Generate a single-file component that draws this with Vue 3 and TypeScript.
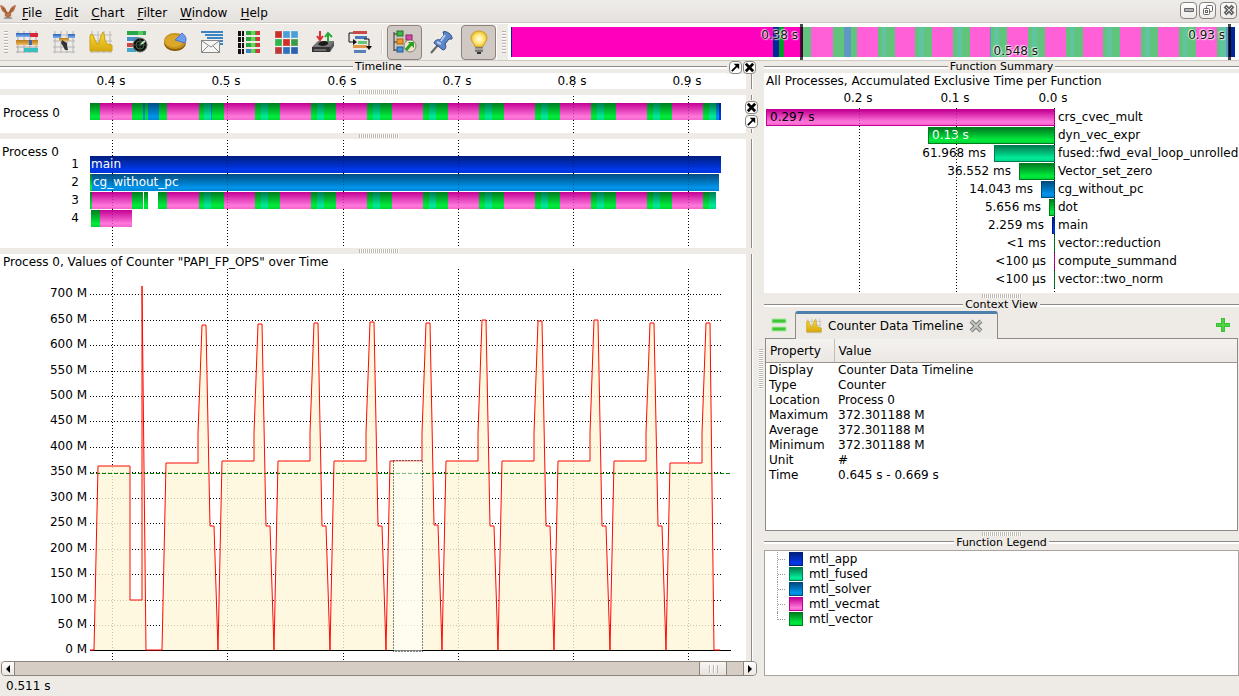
<script setup lang="ts">
type Kind = 'navy' | 'green' | 'pink' | 'blue' | 'teal' | 'gap'
interface Segment { kind: Kind; size: number }

const menus = ['File', 'Edit', 'Chart', 'Filter', 'Window', 'Help']

const START = 90
const SPAN = 631

/* Turns [kind, end] pairs into segments with a length each. */
function segments(from: number, list: [Kind, number][]): Segment[] {
  let at = from
  return list.map(([kind, end]) => {
    const size = end - at
    at = end
    return { kind, size }
  })
}

/* Solver iterations repeat every 56 units. */
const iterations: [Kind, number][] = []
for (let s = 224; s < 672; s += 56) {
  iterations.push(['pink', s + 31], ['green', s + 37], ['teal', s + 44], ['green', s + 56])
}
iterations.push(['pink', 703], ['green', 709], ['teal', 716])

const processLane = segments(START, [
  ['green', 100], ['pink', 132], ['green', 143], ['blue', 145], ['green', 148], ['blue', 159],
  ['green', 167], ['pink', 199], ['green', 204], ['teal', 211], ['blue', 212], ['green', 224],
  ...iterations, ['blue', 719], ['navy', 721],
])

const stackLanes = [
  { level: 1, label: 'main', inset: false, items: segments(START, [['navy', 721]]) },
  { level: 2, label: 'cg_without_pc', inset: true, items: segments(START, [['green', 92], ['blue', 719], ['gap', 721]]) },
  {
    level: 3, label: '', inset: false, items: segments(START, [
      ['green', 92], ['pink', 132], ['green', 143], ['gap', 144], ['green', 148], ['gap', 158], ['green', 167],
      ['pink', 199], ['green', 204], ['teal', 211], ['green', 224], ...iterations, ['gap', 721],
    ]),
  },
  { level: 4, label: '', inset: false, items: segments(START, [['gap', 91], ['green', 100], ['pink', 132], ['gap', 721]]) },
]

const ticks = [112, 227, 343, 458, 573, 688].map((x, i) => ({
  label: `0.${i + 4} s`,
  x: x - START,
  left: `${((x - START) / SPAN) * 100}%`,
}))

/* Overview strip */
const overviewPlain = segments(511, [['navy', 512], ['pink', 773], ['navy', 779], ['green', 784], ['pink', 803]])
const overviewZoomed = segments(803, [
  ['green', 811], ['pink', 833], ['green', 844], ['blue', 851], ['green', 857],
  ['pink', 878], ['green', 882], ['teal', 886], ['green', 895],
  ['pink', 915], ['green', 919], ['teal', 924], ['green', 932],
  ['pink', 953], ['green', 957], ['teal', 962], ['green', 970],
  ['pink', 990], ['blue', 991], ['green', 994], ['teal', 999], ['green', 1007],
  ['pink', 1028], ['green', 1032], ['teal', 1037], ['green', 1045],
  ['pink', 1066], ['green', 1070], ['teal', 1074], ['green', 1083],
  ['pink', 1103], ['green', 1107], ['teal', 1112], ['green', 1120],
  ['pink', 1141], ['green', 1145], ['teal', 1150], ['green', 1158],
  ['pink', 1179], ['green', 1183], ['teal', 1187], ['green', 1196],
  ['pink', 1217], ['green', 1220], ['teal', 1226], ['blue', 1229],
])
const overviewTail = segments(1229, [['navy', 1235]])

/* Counter chart: plot area is 641 x 393 units, zero line at 382. */
const PLOT_H = 393
const gridRows = [26, 52, 77, 103, 128, 153, 179, 204, 230, 255, 281, 306, 332, 357].map((y, i) => ({
  label: `${700 - i * 50} M`, y,
}))
const yLabels = [...gridRows, { label: '0 M', y: 382 }].map(r => ({ ...r, top: `${(r.y / PLOT_H) * 100}%` }))

const points: [number, number][] = [
  [0, 382], [4, 382], [8, 198], [40, 198], [40, 332], [52, 332], [52, 18], [56, 382], [72, 382],
  [76, 195], [108, 195], [108, 165], [112, 57], [116, 57], [120, 258], [124, 258], [128, 382],
]
const peaks = [56, 55, 54, 55, 52, 53, 52, 55, 55]
peaks.forEach((peak, i) => {
  const b = 128 + i * 56
  const last = i === peaks.length - 1
  const flat = last ? 195 : 193
  points.push([b + 4, flat], [b + 36, flat], [b + 36, 165], [b + 40, peak], [b + 44, peak])
  if (last) points.push([b + 48, 382], [b + 54, 382])
  else points.push([b + 48, i === 3 ? 257 : 258], [b + 52, i === 3 ? 257 : 258], [b + 56, 382])
})
const curve = points.map(p => p.join(',')).join(' ')

/* Function summary: bar lengths on an axis 291 units wide. */
const summary: { name: string; time: string; size: number; kind: Kind; inside?: 'dark' | 'light' }[] = [
  { name: 'crs_cvec_mult', time: '0.297 s', size: 289, kind: 'pink', inside: 'dark' },
  { name: 'dyn_vec_expr', time: '0.13 s', size: 127, kind: 'green', inside: 'light' },
  { name: 'fused::fwd_eval_loop_unrolled', time: '61.968 ms', size: 61, kind: 'teal' },
  { name: 'Vector_set_zero', time: '36.552 ms', size: 36, kind: 'green' },
  { name: 'cg_without_pc', time: '14.043 ms', size: 14, kind: 'blue' },
  { name: 'dot', time: '5.656 ms', size: 6, kind: 'green' },
  { name: 'main', time: '2.259 ms', size: 3, kind: 'navy' },
  { name: 'vector::reduction', time: '<1 ms', size: 1, kind: 'green' },
  { name: 'compute_summand', time: '<100 µs', size: 1, kind: 'pink' },
  { name: 'vector::two_norm', time: '<100 µs', size: 1, kind: 'green' },
]
const summaryTicks = [
  { label: '0.2 s', left: `${(95 / 291) * 100}%` },
  { label: '0.1 s', left: `${(192 / 291) * 100}%` },
  { label: '0.0 s', left: `${(290 / 291) * 100}%` },
]

const properties = [
  ['Display', 'Counter Data Timeline'],
  ['Type', 'Counter'],
  ['Location', 'Process 0'],
  ['Maximum', '372.301188 M'],
  ['Average', '372.301188 M'],
  ['Minimum', '372.301188 M'],
  ['Unit', '#'],
  ['Time', '0.645 s - 0.669 s'],
]

const legend: { name: string; kind: Kind }[] = [
  { name: 'mtl_app', kind: 'navy' },
  { name: 'mtl_fused', kind: 'teal' },
  { name: 'mtl_solver', kind: 'blue' },
  { name: 'mtl_vecmat', kind: 'pink' },
  { name: 'mtl_vector', kind: 'green' },
]

const gridPath = 'M1 5H23M1 11H23M1 17H23M1 22H23M3 1V23M9 1V23M15 1V23M21 1V23'
const histogramPath = 'M1 21V6L2 4L4 5L6 10L8 14L10 13L12 6L14 2L15 4L16 10L18 14L23 15V21Z'
const matrix = ['#c9302a', '#4a9fd8', '#4a9fd8', '#2fb34a', '#d03028', '#3a9a48', '#b83a3a', '#2f6fc0', '#2a62b0']
</script>

<template>
  <div class="app">
    <svg class="defs" width="0" height="0" aria-hidden="true">
      <defs>
        <linearGradient id="gold" x1="0" y1="0" x2="0" y2="1"><stop offset="0" stop-color="#f8dc30" /><stop offset="1" stop-color="#d8a810" /></linearGradient>
        <linearGradient id="azure" x1="0" y1="0" x2="0" y2="1"><stop offset="0" stop-color="#2a60b8" /><stop offset="1" stop-color="#7fb4f0" /></linearGradient>
        <linearGradient id="amber" x1="0" y1="0" x2="0" y2="1"><stop offset="0" stop-color="#b87818" /><stop offset="1" stop-color="#f0b860" /></linearGradient>
        <radialGradient id="glow"><stop offset="0" stop-color="#fffde8" /><stop offset="0.6" stop-color="#ffe878" /><stop offset="1" stop-color="#e8b828" /></radialGradient>
      </defs>
    </svg>

    <header class="menubar">
      <svg class="logo" viewBox="0 0 16 16" aria-hidden="true">
        <path d="M0 1C3 1 6 4 7 8H9C10 4 13 1 16 1C15 5 14 8 11 9C12 11 11 13 8 14C5 13 4 11 5 9C2 8 1 5 0 1Z" fill="#b87048" />
        <path d="M3 4L7 9M13 4L9 9" stroke="#8a4a28" fill="none" />
        <path d="M4 14H12" stroke="#666" />
      </svg>
      <nav class="menus">
        <button v-for="m in menus" :key="m" class="menu"><u>{{ m[0] }}</u>{{ m.slice(1) }}</button>
      </nav>
      <div class="window-buttons">
        <button class="win" aria-label="Minimize"><svg viewBox="0 0 12 12"><rect x="1" y="4" width="10" height="4" rx="1" fill="#666" /><path d="M2 6H10" stroke="#fff" /></svg></button>
        <button class="win" aria-label="Restore"><svg viewBox="0 0 12 12" fill="#fff" stroke="#666"><rect x="4.500" y="1.500" width="6" height="6" rx="1" /><rect x="1.500" y="4.500" width="6" height="6" rx="1" /><rect x="3.500" y="6.500" width="2" height="2" /></svg></button>
        <button class="win last" aria-label="Close"><svg viewBox="0 0 12 12"><path d="M2 2L10 10M10 2L2 10" stroke="#666" stroke-width="4" /><path d="M3 3L9 9M9 3L3 9" stroke="#ddd" /></svg></button>
      </div>
    </header>

    <div class="toolbar">
      <span class="grip"></span>
      <div class="tools">
        <button class="tool" aria-label="Master timeline"><svg viewBox="0 0 24 24">
          <path :d="gridPath" stroke="#aaa" /><rect x="1" y="3" width="14" height="4" fill="url(#azure)" /><rect x="15" y="3" width="8" height="4" fill="#d82838" />
          <rect x="1" y="10" width="22" height="5" fill="url(#amber)" /><rect x="14" y="10" width="3" height="5" fill="#3a68b0" /><rect x="9" y="18" width="14" height="4" fill="#38c0c0" /></svg></button>
        <button class="tool" aria-label="Process timeline"><svg viewBox="0 0 24 24">
          <path :d="gridPath" stroke="#b4b4b4" /><rect x="1" y="4" width="8" height="4" fill="url(#azure)" /><rect x="16" y="4" width="7" height="4" fill="url(#azure)" /><rect x="7" y="8" width="10" height="3" fill="url(#amber)" />
          <path d="M10 10L15 13V16L16 20H13L11 16L9 13Z" fill="#333" /></svg></button>
        <button class="tool" aria-label="Counter data timeline"><svg viewBox="0 0 24 24">
          <path :d="gridPath" stroke="#bbb" /><path :d="histogramPath" fill="url(#gold)" stroke="#c8a018" /></svg></button>
        <button class="tool" aria-label="Performance radar"><svg viewBox="0 0 24 24">
          <rect x="1" y="1" width="19" height="4" fill="#28a848" /><rect x="12" y="1" width="5" height="4" fill="#58c860" /><rect x="1" y="7" width="12" height="4" fill="#4890c8" /><rect x="1" y="13" width="8" height="4" fill="#c84848" /><rect x="1" y="18" width="9" height="4" fill="#48a8c8" />
          <circle cx="14" cy="15" r="7" fill="#111" stroke="#777" /><circle cx="14" cy="15" r="4" fill="none" stroke="#446a4c" /><path d="M14 15L19 11" stroke="#b8e8c0" stroke-width="2" /><path d="M14 8V22M7 15H21" stroke="#2c4a34" /></svg></button>
        <button class="tool" aria-label="Function summary"><svg viewBox="0 0 24 24">
          <ellipse cx="12" cy="13" rx="11" ry="8" fill="#8a5c08" /><ellipse cx="12" cy="11" rx="11" ry="8" fill="#c89420" /><ellipse cx="11" cy="11" rx="9" ry="6" fill="#dca82c" /><path d="M12 10L19 3C23 6 24 9 22 13Z" fill="#6b9cf0" stroke="#4b74c8" /></svg></button>
        <button class="tool" aria-label="Message summary"><svg viewBox="0 0 24 24">
          <path d="M1 2H23M5 5H23M7 8H23M4 11H23M14 14H23" stroke="#3a86c4" stroke-width="2" /><rect x="1.500" y="10.500" width="18" height="12" fill="#f5f5f3" stroke="#888" /><path d="M2 11L11 17L19 11M2 22L8 16M19 22L13 16" stroke="#888" fill="none" /></svg></button>
        <button class="tool" aria-label="Process summary"><svg viewBox="0 0 24 24">
          <g v-for="i in 4" :key="i"><rect x="1" :y="i * 6 - 5" width="3" height="5" fill="#111" /><rect x="5" :y="i * 6 - 5" width="2" height="5" fill="#111" /><rect x="9" :y="i * 6 - 5" width="10" height="4" fill="#28a83c" /><rect x="14" :y="i * 6 - 5" width="4" height="4" fill="#70d058" /><rect x="19" :y="i * 6 - 5" width="4" height="4" fill="#d03838" /></g>
          <rect x="9" y="19" width="5" height="4" fill="#3888c8" /></svg></button>
        <button class="tool" aria-label="Communication matrix"><svg viewBox="0 0 24 24">
          <rect v-for="(c, i) in matrix" :key="i" :x="1 + (i % 3) * 8" :y="1 + Math.floor(i / 3) * 8" width="7" height="7" :fill="c" stroke="#fff" stroke-opacity="0.3" /></svg></button>
        <button class="tool" aria-label="I/O summary"><svg viewBox="0 0 24 24">
          <path d="M1 17L7 11H23L20 17Z" fill="#777" /><path d="M1 17H19V22H1Z" fill="#333" /><path d="M19 17L23 11V16L19 22Z" fill="#555" /><path d="M7 14C10 10 18 10 17 14C14 17 8 16 7 14Z" fill="#1a1a1a" /><path d="M3 20H15" stroke="#aaa" />
          <path d="M9 1V9M6 6L9 10L12 6" stroke="#d83030" stroke-width="2" fill="none" /><path d="M17 12V4M14 7L17 3L21 7" stroke="#28a838" stroke-width="2" fill="none" /></svg></button>
        <button class="tool" aria-label="Call tree"><svg viewBox="0 0 24 24">
          <rect x="5" y="1" width="14" height="3" fill="#c84848" /><rect x="7" y="6" width="12" height="3" fill="#4878b8" /><rect x="10" y="11" width="9" height="3" fill="#60c878" /><rect x="5" y="15" width="14" height="3" fill="#e09848" /><rect x="6" y="20" width="12" height="3" fill="#5880b8" />
          <path d="M5 3H1V12H6M16 9H21V17" stroke="#111" fill="none" /><path d="M5 9L9 12L5 15ZM18 16H24L21 20Z" fill="#111" /></svg></button>
        <span class="separator"></span>
        <button class="tool on" aria-label="Show legend" aria-pressed="true"><svg viewBox="0 0 24 24">
          <path d="M1 2V21M1 4H5M1 12H5M1 20H5" stroke="#333" fill="none" /><rect x="4" y="1" width="6" height="5" fill="#38b848" stroke="#28702c" /><rect x="4" y="9" width="6" height="5" fill="#f09828" stroke="#a86410" /><rect x="4" y="17" width="6" height="5" fill="#4890d8" stroke="#285890" /><rect x="13" y="5" width="6" height="5" fill="#d848a8" stroke="#8c2068" />
          <circle cx="17" cy="16" r="6" fill="#ebe5cf" stroke="#87806b" /><path d="M13 20L18 14" stroke="#28a020" stroke-width="3" /><path d="M15 12H21V18Z" fill="#28a020" /></svg></button>
        <button class="tool" aria-label="Pin"><svg viewBox="0 0 24 24">
          <path d="M1 23L8 15" stroke="#666" stroke-width="2" /><path d="M13 2C16 0 23 5 22 9L19 9L15 14C17 17 15 20 13 20L4 13C5 10 8 9 10 10L14 5Z" fill="#5c86c8" stroke="#2c4a80" /><path d="M15 5L11 11M7 12L11 14" stroke="#b4cdf4" stroke-width="2" /></svg></button>
        <button class="tool on" aria-label="Hints" aria-pressed="true"><svg viewBox="0 0 24 24">
          <path d="M12 1C7 1 4 4 4 8C4 12 8 14 8 17H16C16 14 20 12 20 8C20 4 17 1 12 1Z" fill="url(#glow)" stroke="#d0a028" /><rect x="8" y="17" width="8" height="5" rx="1" fill="#777" /><path d="M8 19H16" stroke="#ccc" /><rect x="10" y="22" width="4" height="2" fill="#333" /></svg></button>
      </div>
      <span class="grip second"></span>
      <div class="overview">
        <div class="strip">
          <div class="strip-part plain"><span v-for="(s, i) in overviewPlain" :key="i" :class="s.kind" :style="{ flexGrow: s.size }"></span></div>
          <div class="strip-part zoomed"><span v-for="(s, i) in overviewZoomed" :key="i" :class="s.kind" :style="{ flexGrow: s.size }"></span></div>
          <div class="strip-part tail"><span v-for="(s, i) in overviewTail" :key="i" :class="s.kind" :style="{ flexGrow: s.size }"></span></div>
        </div>
        <span class="marker from"></span><span class="marker to"></span>
        <span class="halo from">0.38 s</span><span class="halo mid">0.548 s</span><span class="halo to">0.93 s</span>
      </div>
    </div>

    <main class="work">
      <section class="left" aria-label="Timeline">
        <div class="title-row">
          <h2 class="title">Timeline</h2>
          <div class="title-buttons">
            <button class="mini" aria-label="Undock timeline"><svg viewBox="0 0 12 12"><path d="M2 10L8 4" stroke="#000" stroke-width="2" /><path d="M4 2H10V8Z" fill="#000" /></svg></button>
            <button class="mini" aria-label="Close timeline"><svg viewBox="0 0 12 12"><path d="M2 2L10 10M10 2L2 10" stroke="#000" stroke-width="3" /></svg></button>
          </div>
        </div>

        <div class="row axis">
          <div class="panel lanes">
            <div></div>
            <div class="plot">
              <span v-for="t in ticks" :key="t.label" class="tick-label" :style="{ left: t.left }">{{ t.label }}</span>
              <span v-for="t in ticks" :key="t.x" class="vdots stub" :style="{ left: t.left }"></span>
            </div>
          </div>
          <div class="side"><i></i></div>
        </div>
        <div class="hsplit"><i></i></div>

        <div class="row process">
          <div class="panel lanes">
            <div class="process-name">Process 0</div>
            <div class="plot">
              <span v-for="t in ticks" :key="t.x" class="vdots" :style="{ left: t.left }"></span>
              <div class="lane">
                <span v-for="(s, i) in processLane" :key="i" class="seg" :class="s.kind" :style="{ flexGrow: s.size }"></span>
                <span v-for="t in ticks" :key="t.x" class="vdots faint" :style="{ left: t.left }"></span>
              </div>
            </div>
          </div>
          <div class="side">
            <i></i>
            <button class="mini" aria-label="Close process view"><svg viewBox="0 0 12 12"><path d="M2 2L10 10M10 2L2 10" stroke="#000" stroke-width="3" /></svg></button>
            <button class="mini" aria-label="Undock process view"><svg viewBox="0 0 12 12"><path d="M2 10L8 4" stroke="#000" stroke-width="2" /><path d="M4 2H10V8Z" fill="#000" /></svg></button>
            <i></i>
          </div>
        </div>
        <div class="hsplit"><i></i></div>

        <div class="row stack">
          <div class="panel lanes">
            <div class="levels">
              <span class="stack-name">Process 0</span>
              <span v-for="l in stackLanes" :key="l.level" class="level">{{ l.level }}</span>
            </div>
            <div class="plot stacked">
              <span v-for="t in ticks" :key="t.x" class="vdots" :style="{ left: t.left }"></span>
              <div v-for="l in stackLanes" :key="l.level" class="lane">
                <span v-for="(s, i) in l.items" :key="i" class="seg" :class="s.kind" :style="{ flexGrow: s.size }"></span>
                <span v-for="t in (l.level < 4 ? ticks : ticks.slice(0, 1))" :key="t.x" class="vdots faint" :style="{ left: t.left }"></span>
                <span v-if="l.label" class="lane-label" :class="{ inset: l.inset }">{{ l.label }}</span>
              </div>
            </div>
          </div>
          <div class="side"><i></i></div>
        </div>
        <div class="hsplit"><i></i></div>

        <div class="row counter">
          <div class="panel counter-panel">
            <h3 class="chart-title">Process 0, Values of Counter "PAPI_FP_OPS" over Time</h3>
            <div class="counter-plot">
              <div class="y-axis"><span v-for="r in yLabels" :key="r.label" :style="{ top: r.top }">{{ r.label }}</span></div>
              <div class="canvas">
                <svg viewBox="0 0 641 393" preserveAspectRatio="none" role="img" aria-label="Counter values over time">
                  <path v-for="r in gridRows" :key="r.y" :d="`M0 ${r.y}.5H631`" class="dots" />
                  <path v-for="t in ticks" :key="t.x" :d="`M${t.x}.5 1V393`" class="dots" />
                  <polygon :points="curve" fill="#fff6d8" fill-opacity="0.8" />
                  <path d="M0 382.500H641" stroke="#000" />
                  <path d="M0 205.500H641" class="average" />
                  <polyline :points="curve" class="curve" />
                  <rect x="303.500" y="192.500" width="29" height="191" fill="#fff" fill-opacity="0.5" class="dots" />
                </svg>
              </div>
            </div>
          </div>
          <div class="side"><i></i></div>
        </div>

        <div class="scrollbar">
          <button class="arrow" aria-label="Scroll left"><svg viewBox="0 0 12 12"><path d="M8 2V10L4 6Z" /></svg></button>
          <div class="track"><div class="thumb"><i></i></div></div>
          <button class="arrow" aria-label="Scroll right"><svg viewBox="0 0 12 12"><path d="M4 2V10L8 6Z" /></svg></button>
        </div>
      </section>

      <div class="vsplit"><i></i></div>

      <div class="right">
        <section class="summary-dock">
          <div class="title-row"><h2 class="title">Function Summary</h2></div>
          <div class="summary">
            <h3 class="chart-title">All Processes, Accumulated Exclusive Time per Function</h3>
            <div class="summary-axis"><div>
              <span v-for="t in summaryTicks" :key="t.label" class="tick-label" :style="{ left: t.left }">{{ t.label }}</span>
            </div></div>
            <div class="summary-rows">
              <div class="summary-grid"><div><span v-for="t in summaryTicks" :key="t.label" class="vdots" :style="{ left: t.left }"></span></div></div>
              <div v-for="r in summary" :key="r.name" class="summary-row">
                <div class="bar-cell">
                  <span v-if="!r.inside" class="time">{{ r.time }}</span>
                  <span class="bar" :class="[r.kind, { thin: r.size < 4 }]" :style="{ width: `${(r.size / 291) * 100}%` }"><span v-if="r.inside" :class="r.inside">{{ r.time }}</span></span>
                </div>
                <span class="name">{{ r.name }}</span>
              </div>
              <div class="summary-grid over"><div><span v-for="t in summaryTicks" :key="t.label" class="vdots faint" :style="{ left: t.left }"></span></div></div>
            </div>
          </div>
        </section>
        <div class="hsplit"><i></i></div>

        <section class="context">
          <div class="title-row"><h2 class="title">Context View</h2></div>
          <div class="tabs">
            <button class="tab-tool" aria-label="Compare"><svg viewBox="0 0 16 16"><rect x="1" y="2" width="14" height="4" fill="#3cc834" stroke="#a8e8a0" /><rect x="1" y="10" width="14" height="4" fill="#3cc834" stroke="#a8e8a0" /></svg></button>
            <div class="tab">
              <svg class="tab-icon" viewBox="0 0 24 24" aria-hidden="true"><path :d="gridPath" stroke="#bbb" /><path :d="histogramPath" fill="url(#gold)" stroke="#c8a018" /></svg>
              <span>Counter Data Timeline</span>
              <button class="tab-close" aria-label="Close tab"><svg viewBox="0 0 14 14"><path d="M2 2L12 12M12 2L2 12" stroke="#777b76" stroke-width="4" /><path d="M2 2L12 12M12 2L2 12" stroke="#c4c6c2" stroke-width="2" /></svg></button>
            </div>
            <button class="tab-tool add" aria-label="Add"><svg viewBox="0 0 16 16"><path d="M8 1V15M1 8H15" stroke="#3cc034" stroke-width="4" /><path d="M8 2V14M2 8H14" stroke="#5ee054" /></svg></button>
          </div>
          <div class="frame">
            <table>
              <thead><tr><th>Property</th><th>Value</th></tr></thead>
              <tbody><tr v-for="p in properties" :key="p[0]"><td>{{ p[0] }}</td><td>{{ p[1] }}</td></tr></tbody>
            </table>
          </div>
        </section>
        <div class="hsplit"><i></i></div>

        <section class="legend-dock">
          <div class="title-row"><h2 class="title">Function Legend</h2></div>
          <ul class="legend">
            <li v-for="l in legend" :key="l.name"><span class="branch"></span><span class="swatch bar" :class="l.kind"></span>{{ l.name }}</li>
          </ul>
        </section>
      </div>
    </main>

    <footer class="status">0.511 s</footer>
  </div>
</template>

<style>
body { margin: 0; background: #eeebe7; }
</style>

<style scoped>
* { box-sizing: border-box; }
.app {
  display: flex; flex-direction: column; min-height: 100vh; overflow: hidden;
  background: #eeebe7; color: #000; font: 12px/14px "DejaVu Sans", Verdana, sans-serif; white-space: nowrap;
}
.defs { position: absolute; }
button { padding: 0; border: 0; background: none; font: inherit; color: inherit; }
svg { display: block; }
h2, h3 { margin: 0; font-weight: normal; }

.navy { --c1: #001e7c; --c2: #0038ec; --c3: #0034d4; --flat: #002898; }
.green { --c1: #007c20; --c2: #00ec3c; --c3: #00d434; --flat: #009c28; }
.pink { --c1: #c40094; --c2: #ff78dc; --c3: #f464cc; --flat: #ff00bd; }
.blue { --c1: #004c80; --c2: #0094ec; --c3: #0084d4; --flat: #0064a8; }
.teal { --c1: #007c50; --c2: #00ec98; --c3: #00d488; --flat: #009c68; }

/* Menu bar */
.menubar { display: flex; align-items: center; height: 24px; background: linear-gradient(#efedea, #e4e0dc); border-bottom: 1px solid #fff; box-shadow: inset 0 -1px #cfcac4; }
.logo { width: 16px; height: 16px; }
.menus { display: flex; flex: 1; padding-left: 1px; gap: 1px; }
.menu { padding: 4px 6px 2px 5px; }
.menu + .menu { padding-left: 6px; }
.menu u { text-underline-offset: 2px; }
.window-buttons { display: flex; gap: 2px; padding: 0 2px 3px 0; }
.win { display: grid; place-items: center; width: 17px; height: 17px; border: 1px solid #88837e; border-radius: 4px; background: linear-gradient(#fff, #eeebe7); }
.win.last { margin-left: 2px; }
.win svg { width: 12px; height: 12px; }

/* Tool bar */
.toolbar { display: flex; align-items: center; height: 37px; border-bottom: 1px solid #cfcac4; }
.grip { flex: none; width: 4px; height: 22px; margin: 0 1px 0 4px; background: repeating-linear-gradient(#b8b3ad 0 1px, #fff 1px 2px, transparent 2px 3px); }
.grip.second { margin: 0 2px 0 5px; }
.tools { display: flex; align-items: center; gap: 2px; flex: none; border-right: 1px solid #fff; }
.tool { display: grid; place-items: center; width: 35px; height: 35px; border: 1px solid transparent; border-radius: 4px; }
.tool.on { background: #cfc8c3; border-color: #8c847e; }
.tool svg { width: 24px; height: 24px; }
.separator { width: 2px; height: 24px; margin: 0 2px; border-left: 1px solid #d4cfca; border-right: 1px solid #fff; }
.overview { position: relative; display: flex; flex: 1; align-self: stretch; align-items: center; padding: 0 4px 0 3px; background: #fff; }
.strip { display: flex; flex: 1; height: 30px; }
.strip-part { display: flex; min-width: 0; }
.strip-part span { flex: 1 1 0; background: var(--flat); }
.plain { flex: 292 1 0; }
.zoomed { flex: 426 1 0; }
.tail { flex: 6 1 0; }
.zoomed .green { --flat: #60c47c; }
.zoomed .pink { --flat: #ff60d8; }
.zoomed .teal { --flat: #60c4a0; }
.zoomed .blue { --flat: #6098c4; }
.marker { position: absolute; top: 0; bottom: 0; width: 3px; background: rgba(0, 0, 0, 0.72); }
.marker.from { left: 40%; }
.marker.to { right: 8px; }
.halo { position: absolute; color: #111; text-shadow: 0 0 2px #ffffffd0, 0 0 2px #ffffffd0, 1px 1px 1px #ffffffa0, -1px -1px 1px #ffffffa0; }
.halo.from { right: 441px; top: 4px; }
.halo.mid { right: 201px; bottom: 2px; }
.halo.to { right: 14px; top: 4px; }

/* Work area */
.work { display: grid; flex: 1; grid-template-columns: minmax(0, 757fr) 7px minmax(0, 475fr); }
.left, .right { display: flex; flex-direction: column; min-width: 0; }
.title-row { position: relative; display: flex; align-items: center; height: 12px; }
.title { display: flex; flex: 1; align-items: center; gap: 2px; font-size: 11px; line-height: 12px; }
.title::before, .title::after { content: ""; flex: 1; height: 2px; border-top: 1px solid #8f8a85; background: #fff; }
.title-buttons { position: absolute; right: 0; top: 0; display: flex; gap: 1px; padding: 0 1px 0 2px; background: #eeebe7; }
.mini { flex: none; width: 13px; height: 13px; border: 1px solid #8c8680; border-radius: 4px; background: #fff; }
.mini svg { width: 11px; height: 11px; }

.row { display: flex; }
.panel { flex: 1; min-width: 0; background: #fff; }
.lanes { display: grid; grid-template-columns: 90px minmax(0, 1fr) 25px; }
.plot { position: relative; }
.side { display: flex; flex-direction: column; align-items: center; gap: 1px; width: 11px; flex: none; }
.side i { flex: 1; width: 2px; border-left: 1px solid #8f8a85; background: #fff; }
.side .mini { width: 13px; }
.axis { height: 16px; }
.process { height: 38px; }
.stack { height: 109px; }
.counter { flex: 1; min-height: 240px; }

.hsplit { display: grid; place-items: center; height: 6px; flex: none; }
.hsplit i { width: 40px; height: 4px; background: repeating-linear-gradient(90deg, #bdb8b2 0 1px, #fff 1px 2px); }
.vsplit { display: grid; place-items: center; }
.vsplit i { width: 4px; height: 40px; background: repeating-linear-gradient(#bdb8b2 0 1px, #fff 1px 2px); }

.tick-label { position: absolute; top: 1px; margin-left: -1px; transform: translateX(-50%); }
.vdots { position: absolute; top: 0; bottom: 0; width: 1px; background: repeating-linear-gradient(transparent 0 1px, #000 1px 2px, transparent 2px 3px); }
.vdots.stub { top: 12px; }
.vdots.faint { opacity: 0.3; }

.process-name { padding: 11px 0 0 3px; }
.process .plot { padding-top: 8px; }
.lane { position: relative; display: flex; height: 17px; }
.seg { flex: 1 1 0; background: linear-gradient(var(--c1), var(--c2) 80%, var(--c3)); }
.seg.gap { background: #fff; }
.stack .seg.gap { background: none; }
.levels { display: flex; flex-direction: column; padding-top: 6px; }
.stack-name { padding-left: 2px; height: 12px; }
.level { height: 18px; padding-right: 11px; line-height: 15px; text-align: right; }
.stacked { display: flex; flex-direction: column; gap: 1px; padding-top: 17px; }
.lane-label { position: absolute; left: 1px; top: 1px; color: #fff; }
.lane-label.inset { left: 3px; }

/* Counter chart */
.counter-panel { display: flex; flex-direction: column; }
.chart-title { height: 14px; padding-left: 3px; font-size: 12px; line-height: 16px; }
.counter-plot { display: grid; flex: 1; grid-template-columns: 90px minmax(0, 1fr) 15px; }
.y-axis { position: relative; }
.y-axis span { position: absolute; right: 3px; margin-top: -8px; }
.canvas { position: relative; }
.canvas svg { position: absolute; inset: 0; width: 100%; height: 100%; }
.dots { stroke: #000; stroke-width: 1; stroke-dasharray: 1 2; }
.average { stroke: #008000; stroke-dasharray: 4 2; }
.curve { fill: none; stroke: #ff0800; stroke-width: 1; }

.scrollbar { display: flex; height: 15px; border: 1px solid #8c857e; border-radius: 4px; background: #d6cdc5; margin: 0 0 0 1px; overflow: hidden; }
.arrow { width: 13px; background: linear-gradient(#fff, #ebe7e3); }
.arrow:first-child { border-right: 1px solid #8c857e; }
.arrow:last-child { border-left: 1px solid #8c857e; }
.arrow svg { width: 12px; height: 12px; }
.track { display: flex; flex: 1; justify-content: flex-end; padding-right: 16px; }
.thumb { display: grid; place-items: center; width: 28px; border: solid #8c857e; border-width: 0 1px; background: linear-gradient(#f8f6f4, #e6e1dc); }
.thumb i { width: 9px; height: 8px; background: repeating-linear-gradient(90deg, #bdb6af 0 1px, #fff 1px 2px, transparent 2px 4px); }

/* Function summary */
.summary { height: 220px; background: #fff; }
.summary .chart-title { height: 15px; padding-left: 2px; }
.summary-axis, .summary-grid, .summary-row { display: grid; grid-template-columns: minmax(0, 291fr) minmax(0, 184fr); }
.summary-axis { height: 18px; }
.summary-axis > div, .summary-grid > div { position: relative; }
.summary-axis .tick-label { top: 3px; }
.summary-rows { position: relative; padding-top: 3px; height: 187px; }
.summary-grid { position: absolute; inset: 1px 0; pointer-events: none; }
.summary-row { position: relative; height: 18px; }
.bar-cell { display: flex; justify-content: flex-end; }
.time { margin-right: 8px; line-height: 16px; }
.bar { height: 17px; border: 1px solid var(--c1); background: linear-gradient(var(--c1), var(--c2) 80%, var(--c3)); }
.bar.thin { border-width: 0 0 0 1px; }
.bar span { padding-left: 3px; line-height: 14px; }
.light { color: #fff; }
.name { padding-left: 3px; line-height: 16px; }

/* Context view */
.context { display: flex; flex: 5 1 0; flex-direction: column; }
.tabs { display: flex; height: 28px; align-items: center; margin-bottom: -1px; position: relative; }
.tab-tool { width: 16px; margin-left: 7px; }
.tab-tool svg { width: 16px; height: 16px; }
.tab-tool.add { margin: 0 8px 0 auto; }
.tab { display: flex; align-items: center; height: 28px; margin-left: 8px; padding: 0 14px 2px 10px; gap: 6px; border: 1px solid #8f8a85; border-bottom: 0; border-top: 3px solid #4f7fab; border-radius: 3px 3px 0 0; background: #eeebe7; }
.tab-icon { width: 16px; height: 16px; }
.tab-close svg { width: 14px; height: 14px; }
.frame { flex: 1; margin: 0 1px; border: 1px solid #8f8a85; background: #fff; }
table { width: 100%; border-collapse: collapse; table-layout: fixed; }
th { height: 23px; padding: 2px 0 0 4px; font-weight: normal; text-align: left; background: linear-gradient(#f4f2ef, #ebe7e3); border-bottom: 1px solid #9c958e; }
th:first-child { width: 68px; border-right: 1px solid #c4beb8; }
td { height: 15px; padding: 0 0 0 4px; line-height: 15px; }
td:first-child { padding-left: 3px; }

/* Legend */
.legend-dock { display: flex; flex: 3 1 0; flex-direction: column; }
.legend { flex: 1; margin: 1px 0 0; padding: 1px 0 0 12px; list-style: none; border: 1px solid #aaa49e; background: #fff; }
.legend li { display: flex; align-items: center; height: 15px; }
.branch { width: 9px; height: 15px; border-left: 1px dotted #999; background: linear-gradient(90deg, #999 50%, transparent 0) 0 7px / 2px 1px repeat-x; }
.legend li:last-child .branch { height: 8px; align-self: flex-start; }
.swatch { width: 14px; height: 14px; margin: 0 6px 0 3px; }

.status { height: 20px; padding: 3px 6px; }
</style>
